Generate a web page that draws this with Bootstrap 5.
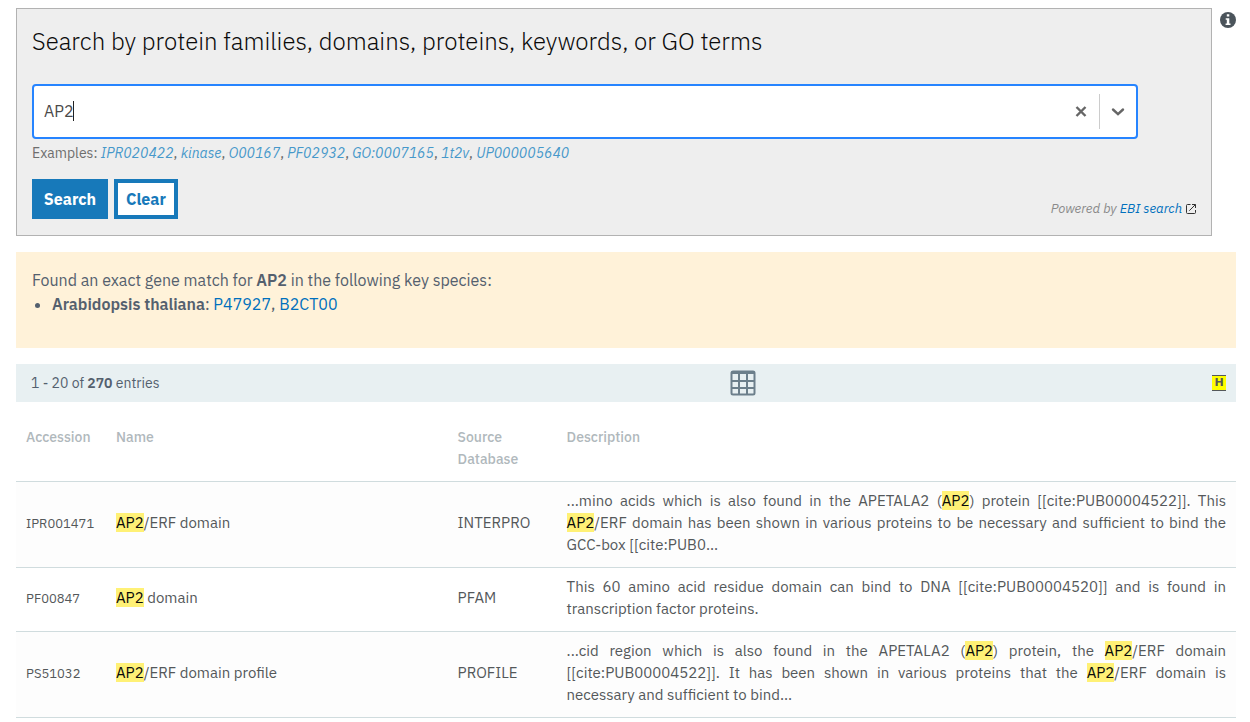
<!DOCTYPE html>
<html lang="en">
<head>
<meta charset="utf-8">
<meta name="viewport" content="width=device-width, initial-scale=1">
<title>InterPro search</title>
<link href="https://cdn.jsdelivr.net/npm/bootstrap@5.3.0/dist/css/bootstrap.min.css" rel="stylesheet">
<style>
  body { font-family: "IBM Plex Sans", Inter, Roboto, sans-serif; font-size: 16px; line-height: 24px; color: #54585a; background: #fff; }
  a { color: #0070bd; text-decoration: none; }
  .page { padding: 8px 14px 0 16px; }
  .search-box { background: #eee; border: 1px solid #b2b2b2; padding: 15px 15px 16px; }
  .search-title { font-weight: 300; font-size: 24px; line-height: 34px; color: #0a0a0a; margin-bottom: 26px; }
  .search-field { width: 95%; height: 55px; background: #fff; border: 2px solid #2684ff; border-radius: 4px; }
  .search-field input { font-size: 16px; color: #4a4a4a; padding: 0 0 2px 10px; outline: 0; background: none; caret-color: transparent; }
  .caret-bar { left: 39px; width: 1px; height: 20px; top: 15px; background: #222; }
  .search-field button { width: 36px; color: #666; }
  .field-divider { width: 1px; margin: 8px 0; background: #ccc; }
  .examples { font-size: 14px; line-height: 20px; margin-top: 4px; color: #6e6e6e; }
  .examples a { color: #4698ca; }
  .btn-ebi { height: 40px; padding: 0; border: 4px solid #1779ba; border-radius: 0; background: #1779ba; color: #fff; font-size: 16px; font-weight: 700; }
  .btn-ebi:hover { background: #14679e; border-color: #14679e; color: #fff; }
  .btn-search { width: 76px; margin-right: 6px; }
  .btn-clear, .btn-clear:hover { width: 64px; background: #fff; color: #1779ba; border-color: #1779ba; }
  .powered { font-size: 13px; line-height: 20px; color: #8a8a8a; }
  .info-link { padding: 4px 0 0 8px; color: #54585a; }
  .species-note { background: #fff2d9; color: #54606e; padding: 16px; height: 96px; }
  .species-note b, .result-bar b { font-weight: 600; }
  .species-note ul { padding-left: 20px; }
  .result-bar { background: #e8f0f2; color: #54606e; height: 38px; padding: 0 10px 0 15px; font-size: 14px; }
  .view-icon { color: #6c7f8b; margin-left: 2px; }
  .mark-toggle { width: 14px; height: 16px; background: #ff0; border: solid #54585a; border-width: 1px 0; font: 700 11px/14px "DejaVu Sans", sans-serif; color: #54585a; }
  .entries { table-layout: fixed; width: 100%; font-size: 15px; line-height: 22px; }
  .entries th { font-size: 14px; font-weight: 500; color: #b0b8bc; vertical-align: top; padding: 24px 10px 11px; }
  .entries td { padding: 8px 10px 11px; color: #54585a; }
  .entries tr { border-bottom: 1px solid #d0dcde; }
  .entries tbody tr:nth-child(odd) { background: #fdfdfd; }
  .entries a { color: #54585a; }
  .entries td:first-child a { font-size: 13px; }
  .entries td:last-child { text-align: justify; }
  .hit { background: #fff176; color: #0a0a0a; }
  .col-acc { width: 90px; } .col-name { width: 28%; } .col-src { width: 109px; }
</style>
</head>
<body>
<main class="page">
  <div class="d-flex align-items-start">
    <form class="search-box flex-grow-1" onsubmit="return false">
      <h1 class="search-title"><label for="q">Search by protein families, domains, proteins, keywords, or GO terms</label></h1>
      <div class="search-field d-flex position-relative">
        <input id="q" type="text" class="flex-grow-1 border-0" value="AP2" autocomplete="off" spellcheck="false">
        <span class="caret-bar position-absolute"></span>
        <button type="button" class="border-0 bg-transparent p-0 d-flex align-items-center justify-content-center" aria-label="Clear value">
          <svg width="14" height="14" viewBox="0 0 14 14"><path d="M2.500 2l9 9M11.500 2l-9 9" stroke="currentColor" stroke-width="2.4"/></svg>
        </button>
        <span class="field-divider"></span>
        <button type="button" class="border-0 bg-transparent p-0 d-flex align-items-center justify-content-center" aria-label="Show options">
          <svg width="14" height="10" viewBox="0 0 14 10"><path d="M2 2.500l5 4.600 5-4.600" fill="none" stroke="currentColor" stroke-width="2.400" stroke-linecap="round"/></svg>
        </button>
      </div>
      <div class="examples">Examples: <a href="#"><i>IPR020422</i></a>, <a href="#"><i>kinase</i></a>, <a href="#"><i>O00167</i></a>, <a href="#"><i>PF02932</i></a>, <a href="#"><i>GO:0007165</i></a>, <a href="#"><i>1t2v</i></a>, <a href="#"><i>UP000005640</i></a></div>
      <div class="d-flex justify-content-between align-items-end mt-3">
        <div class="d-flex">
          <button type="submit" class="btn btn-ebi btn-search">Search</button>
          <button type="reset" class="btn btn-ebi btn-clear">Clear</button>
        </div>
        <div class="powered d-flex align-items-center"><i class="me-1">Powered by <a href="#">EBI search</a></i>
          <svg width="10" height="10" viewBox="0 0 10 10" fill="none" stroke="#333"><path d="M4.500.500H1.500a1 1 0 0 0-1 1v7a1 1 0 0 0 1 1h7a1 1 0 0 0 1-1V6M6 .5h3.500V4M9.300.700L3.300 6.700"/></svg>
        </div>
      </div>
    </form>
    <a href="#" class="info-link d-flex" aria-label="Help">
      <svg width="16" height="16" viewBox="0 0 16 16"><circle cx="8" cy="8" r="8" fill="#4b545b"/><path d="M6.800 2.300h2.500v2.300H6.800zM5.700 6.200h3.600v5.400h1.200v1.500H5.600v-1.500h1.200V7.700H5.700z" fill="#fff"/></svg>
    </a>
  </div>

  <section class="species-note mt-3">
    Found an exact gene match for <b>AP2</b> in the following key species:
    <ul class="mb-0"><li><b>Arabidopsis thaliana</b>: <a href="#">P47927</a>, <a href="#">B2CT00</a></li></ul>
  </section>

  <section class="mt-3">
    <div class="result-bar d-flex align-items-center">
      <div class="col-7">1 - 20 of <b>270</b> entries</div>
      <button type="button" class="view-icon border-0 bg-transparent p-0 d-flex" aria-label="Table view">
        <svg width="26" height="26" viewBox="0 0 26 26"><path fill="none" stroke="currentColor" stroke-width="2" d="M3 1.500h20a1.500 1.500 0 0 1 1.500 1.500v20a1.500 1.500 0 0 1-1.500 1.500H3A1.500 1.500 0 0 1 1.500 23V3A1.500 1.500 0 0 1 3 1.500zM9 3v21M17 3v21M2 11h22M2 18h22"/><path d="M1.500 1h23v3h-23z" fill="currentColor"/></svg>
      </button>
      <div class="flex-grow-1 d-flex justify-content-end"><button type="button" class="mark-toggle p-0" aria-label="Highlight matches">H</button></div>
    </div>
    <table class="entries">
      <colgroup><col class="col-acc"><col class="col-name"><col class="col-src"><col></colgroup>
      <thead><tr><th>Accession</th><th>Name</th><th>Source Database</th><th>Description</th></tr></thead>
      <tbody>
        <tr><td><a href="#">IPR001471</a></td><td><a href="#"><span class="hit">AP2</span>/ERF domain</a></td><td>INTERPRO</td>
          <td>...mino acids which is also found in the APETALA2 (<span class="hit">AP2</span>) protein [[cite:PUB00004522]]. This <span class="hit">AP2</span>/ERF domain has been shown in various proteins to be necessary and sufficient to bind the GCC-box [[cite:PUB0...</td></tr>
        <tr><td><a href="#">PF00847</a></td><td><a href="#"><span class="hit">AP2</span> domain</a></td><td>PFAM</td>
          <td>This 60 amino acid residue domain can bind to DNA [[cite:PUB00004520]] and is found in transcription factor proteins.</td></tr>
        <tr><td><a href="#">PS51032</a></td><td><a href="#"><span class="hit">AP2</span>/ERF domain profile</a></td><td>PROFILE</td>
          <td>...cid region which is also found in the APETALA2 (<span class="hit">AP2</span>) protein, the <span class="hit">AP2</span>/ERF domain [[cite:PUB00004522]]. It has been shown in various proteins that the <span class="hit">AP2</span>/ERF domain is necessary and sufficient to bind...</td></tr>
      </tbody>
    </table>
  </section>
</main>
<script src="https://cdn.jsdelivr.net/npm/bootstrap@5.3.0/dist/js/bootstrap.bundle.min.js"></script>
</body>
</html>
